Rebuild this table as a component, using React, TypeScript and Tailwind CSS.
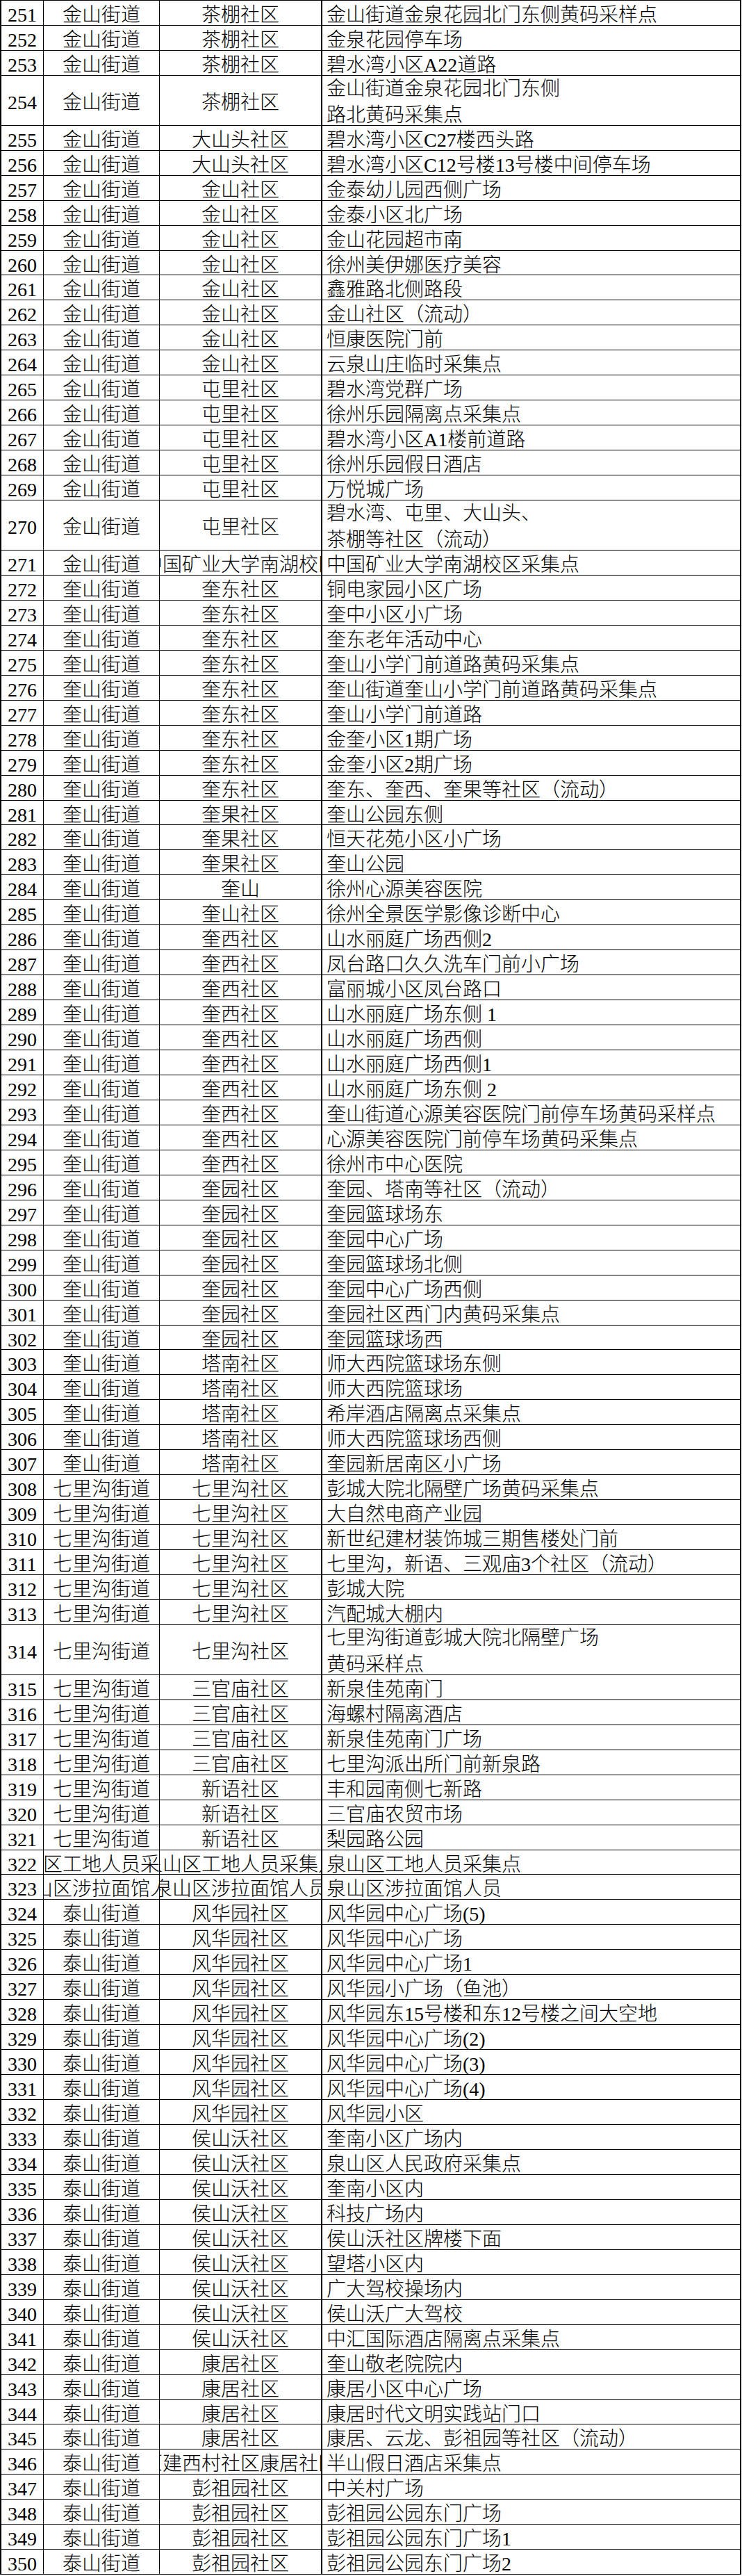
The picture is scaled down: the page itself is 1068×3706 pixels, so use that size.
type Row = {
  no: number;
  street: string;
  community: string;
  site: string;
  tall?: boolean;
};

const T = "泰山街道";
const K = "奎山街道";
const J = "金山街道";
const Q = "七里沟街道";

const rows: Row[] = [
  { no: 251, street: J, community: "茶棚社区", site: "金山街道金泉花园北门东侧黄码采样点" },
  { no: 252, street: J, community: "茶棚社区", site: "金泉花园停车场" },
  { no: 253, street: J, community: "茶棚社区", site: "碧水湾小区A22道路" },
  { no: 254, street: J, community: "茶棚社区", site: "金山街道金泉花园北门东侧\n路北黄码采集点", tall: true },
  { no: 255, street: J, community: "大山头社区", site: "碧水湾小区C27楼西头路" },
  { no: 256, street: J, community: "大山头社区", site: "碧水湾小区C12号楼13号楼中间停车场" },
  { no: 257, street: J, community: "金山社区", site: "金泰幼儿园西侧广场" },
  { no: 258, street: J, community: "金山社区", site: "金泰小区北广场" },
  { no: 259, street: J, community: "金山社区", site: "金山花园超市南" },
  { no: 260, street: J, community: "金山社区", site: "徐州美伊娜医疗美容" },
  { no: 261, street: J, community: "金山社区", site: "鑫雅路北侧路段" },
  { no: 262, street: J, community: "金山社区", site: "金山社区（流动）" },
  { no: 263, street: J, community: "金山社区", site: "恒康医院门前" },
  { no: 264, street: J, community: "金山社区", site: "云泉山庄临时采集点" },
  { no: 265, street: J, community: "屯里社区", site: "碧水湾党群广场" },
  { no: 266, street: J, community: "屯里社区", site: "徐州乐园隔离点采集点" },
  { no: 267, street: J, community: "屯里社区", site: "碧水湾小区A1楼前道路" },
  { no: 268, street: J, community: "屯里社区", site: "徐州乐园假日酒店" },
  { no: 269, street: J, community: "屯里社区", site: "万悦城广场" },
  { no: 270, street: J, community: "屯里社区", site: "碧水湾、屯里、大山头、\n茶棚等社区（流动）", tall: true },
  { no: 271, street: J, community: "中国矿业大学南湖校区", site: "中国矿业大学南湖校区采集点" },
  { no: 272, street: K, community: "奎东社区", site: "铜电家园小区广场" },
  { no: 273, street: K, community: "奎东社区", site: "奎中小区小广场" },
  { no: 274, street: K, community: "奎东社区", site: "奎东老年活动中心" },
  { no: 275, street: K, community: "奎东社区", site: "奎山小学门前道路黄码采集点" },
  { no: 276, street: K, community: "奎东社区", site: "奎山街道奎山小学门前道路黄码采集点" },
  { no: 277, street: K, community: "奎东社区", site: "奎山小学门前道路" },
  { no: 278, street: K, community: "奎东社区", site: "金奎小区1期广场" },
  { no: 279, street: K, community: "奎东社区", site: "金奎小区2期广场" },
  { no: 280, street: K, community: "奎东社区", site: "奎东、奎西、奎果等社区（流动）" },
  { no: 281, street: K, community: "奎果社区", site: "奎山公园东侧" },
  { no: 282, street: K, community: "奎果社区", site: "恒天花苑小区小广场" },
  { no: 283, street: K, community: "奎果社区", site: "奎山公园" },
  { no: 284, street: K, community: "奎山", site: "徐州心源美容医院" },
  { no: 285, street: K, community: "奎山社区", site: "徐州全景医学影像诊断中心" },
  { no: 286, street: K, community: "奎西社区", site: "山水丽庭广场西侧2" },
  { no: 287, street: K, community: "奎西社区", site: "凤台路口久久洗车门前小广场" },
  { no: 288, street: K, community: "奎西社区", site: "富丽城小区凤台路口" },
  { no: 289, street: K, community: "奎西社区", site: "山水丽庭广场东侧 1" },
  { no: 290, street: K, community: "奎西社区", site: "山水丽庭广场西侧" },
  { no: 291, street: K, community: "奎西社区", site: "山水丽庭广场西侧1" },
  { no: 292, street: K, community: "奎西社区", site: "山水丽庭广场东侧 2" },
  { no: 293, street: K, community: "奎西社区", site: "奎山街道心源美容医院门前停车场黄码采样点" },
  { no: 294, street: K, community: "奎西社区", site: "心源美容医院门前停车场黄码采集点" },
  { no: 295, street: K, community: "奎西社区", site: "徐州市中心医院" },
  { no: 296, street: K, community: "奎园社区", site: "奎园、塔南等社区（流动）" },
  { no: 297, street: K, community: "奎园社区", site: "奎园篮球场东" },
  { no: 298, street: K, community: "奎园社区", site: "奎园中心广场" },
  { no: 299, street: K, community: "奎园社区", site: "奎园篮球场北侧" },
  { no: 300, street: K, community: "奎园社区", site: "奎园中心广场西侧" },
  { no: 301, street: K, community: "奎园社区", site: "奎园社区西门内黄码采集点" },
  { no: 302, street: K, community: "奎园社区", site: "奎园篮球场西" },
  { no: 303, street: K, community: "塔南社区", site: "师大西院篮球场东侧" },
  { no: 304, street: K, community: "塔南社区", site: "师大西院篮球场" },
  { no: 305, street: K, community: "塔南社区", site: "希岸酒店隔离点采集点" },
  { no: 306, street: K, community: "塔南社区", site: "师大西院篮球场西侧" },
  { no: 307, street: K, community: "塔南社区", site: "奎园新居南区小广场" },
  { no: 308, street: Q, community: "七里沟社区", site: "彭城大院北隔壁广场黄码采集点" },
  { no: 309, street: Q, community: "七里沟社区", site: "大自然电商产业园" },
  { no: 310, street: Q, community: "七里沟社区", site: "新世纪建材装饰城三期售楼处门前" },
  { no: 311, street: Q, community: "七里沟社区", site: "七里沟，新语、三观庙3个社区（流动）" },
  { no: 312, street: Q, community: "七里沟社区", site: "彭城大院" },
  { no: 313, street: Q, community: "七里沟社区", site: "汽配城大棚内" },
  { no: 314, street: Q, community: "七里沟社区", site: "七里沟街道彭城大院北隔壁广场\n黄码采样点", tall: true },
  { no: 315, street: Q, community: "三官庙社区", site: "新泉佳苑南门" },
  { no: 316, street: Q, community: "三官庙社区", site: "海螺村隔离酒店" },
  { no: 317, street: Q, community: "三官庙社区", site: "新泉佳苑南门广场" },
  { no: 318, street: Q, community: "三官庙社区", site: "七里沟派出所门前新泉路" },
  { no: 319, street: Q, community: "新语社区", site: "丰和园南侧七新路" },
  { no: 320, street: Q, community: "新语社区", site: "三官庙农贸市场" },
  { no: 321, street: Q, community: "新语社区", site: "梨园路公园" },
  { no: 322, street: "泉山区工地人员采集点", community: "泉山区工地人员采集点", site: "泉山区工地人员采集点" },
  { no: 323, street: "泉山区涉拉面馆人员", community: "泉山区涉拉面馆人员", site: "泉山区涉拉面馆人员" },
  { no: 324, street: T, community: "风华园社区", site: "风华园中心广场(5)" },
  { no: 325, street: T, community: "风华园社区", site: "风华园中心广场" },
  { no: 326, street: T, community: "风华园社区", site: "风华园中心广场1" },
  { no: 327, street: T, community: "风华园社区", site: "风华园小广场（鱼池）" },
  { no: 328, street: T, community: "风华园社区", site: "风华园东15号楼和东12号楼之间大空地" },
  { no: 329, street: T, community: "风华园社区", site: "风华园中心广场(2)" },
  { no: 330, street: T, community: "风华园社区", site: "风华园中心广场(3)" },
  { no: 331, street: T, community: "风华园社区", site: "风华园中心广场(4)" },
  { no: 332, street: T, community: "风华园社区", site: "风华园小区" },
  { no: 333, street: T, community: "侯山沃社区", site: "奎南小区广场内" },
  { no: 334, street: T, community: "侯山沃社区", site: "泉山区人民政府采集点" },
  { no: 335, street: T, community: "侯山沃社区", site: "奎南小区内" },
  { no: 336, street: T, community: "侯山沃社区", site: "科技广场内" },
  { no: 337, street: T, community: "侯山沃社区", site: "侯山沃社区牌楼下面" },
  { no: 338, street: T, community: "侯山沃社区", site: "望塔小区内" },
  { no: 339, street: T, community: "侯山沃社区", site: "广大驾校操场内" },
  { no: 340, street: T, community: "侯山沃社区", site: "侯山沃广大驾校" },
  { no: 341, street: T, community: "侯山沃社区", site: "中汇国际酒店隔离点采集点" },
  { no: 342, street: T, community: "康居社区", site: "奎山敬老院院内" },
  { no: 343, street: T, community: "康居社区", site: "康居小区中心广场" },
  { no: 344, street: T, community: "康居社区", site: "康居时代文明实践站门口" },
  { no: 345, street: T, community: "康居社区", site: "康居、云龙、彭祖园等社区（流动）" },
  { no: 346, street: T, community: "原建西村社区康居社区", site: "半山假日酒店采集点" },
  { no: 347, street: T, community: "彭祖园社区", site: "中关村广场" },
  { no: 348, street: T, community: "彭祖园社区", site: "彭祖园公园东门广场" },
  { no: 349, street: T, community: "彭祖园社区", site: "彭祖园公园东门广场1" },
  { no: 350, street: T, community: "彭祖园社区", site: "彭祖园公园东门广场2" },
];

function TableRow({ row }: { row: Row }) {
  const pad = row.tall ? "pt-[25px]" : "pt-[7px]";
  return (
    <div
      className={`flex border-b border-black ${row.tall ? "h-[71.92px]" : "h-[35.96px]"}`}
    >
      <div
        className={`w-[61px] shrink-0 flex justify-center overflow-hidden whitespace-nowrap border-r border-black leading-[28px] ${pad}`}
      >
        {row.no}
      </div>
      <div
        className={`w-[167px] shrink-0 flex justify-center overflow-hidden whitespace-nowrap border-r border-black leading-[28px] ${pad}`}
      >
        {row.street}
      </div>
      <div
        className={`w-[234px] shrink-0 flex justify-center overflow-hidden whitespace-nowrap border-r-2 border-black leading-[28px] ${pad}`}
      >
        {row.community}
      </div>
      <div
        className={`flex-1 overflow-hidden whitespace-pre-line pl-[6px] ${
          row.tall ? "leading-[38px]" : `leading-[28px] ${pad}`
        }`}
      >
        {row.site}
      </div>
    </div>
  );
}

export default function App() {
  return (
    <div className="w-[1068px] min-h-[3706px] bg-white">
      <div className="w-[1067px] border-t border-l-2 border-r-2 border-black text-black text-[28px] font-light font-['Liberation_Serif','Noto_Sans_CJK_SC',serif]">
        {rows.map((row) => (
          <TableRow key={row.no} row={row} />
        ))}
      </div>
    </div>
  );
}
